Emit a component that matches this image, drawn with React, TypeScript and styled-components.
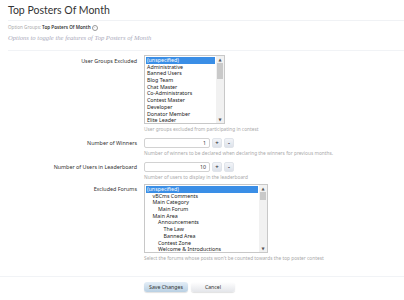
import React from "react";
import styled, { createGlobalStyle } from "styled-components";

const Global = createGlobalStyle`
  html, body { margin: 0; padding: 0; background: #fff; }
  body { font-family: "Noto Sans", "DejaVu Sans", sans-serif; color: #222; }
`;

const Page = styled.div`
  width: 404px;
  height: 300px;
  overflow: hidden;
  background: #fff;
`;

const Header = styled.div`
  padding: 3px 0 0 8px;
`;

const Title = styled.h1`
  margin: 0;
  font-family: "Lato", "Noto Sans", sans-serif;
  font-weight: 400;
  font-size: 10.5px;
  line-height: 15px;
  color: #333;
  padding-bottom: 2px;
  border-bottom: 1px solid #f0f2f5;
`;

const Groups = styled.div`
  margin-top: 3px;
  font-size: 4.6px;
  line-height: 7px;
  color: #aaa;
  display: flex;
  align-items: center;
  gap: 1px;
  b { color: #333; font-weight: 600; }
`;

const Chevron = styled.span`
  display: inline-flex;
  width: 4px;
  height: 4px;
  border: 0.5px solid #999;
  border-radius: 50%;
  align-items: center;
  justify-content: center;
  font-size: 3px;
  color: #777;
  line-height: 1;
`;

const Desc = styled.div`
  margin-top: 3px;
  font-family: "Liberation Serif", "DejaVu Serif", serif;
  font-style: italic;
  font-size: 6.6px;
  line-height: 8px;
  color: #aab;
  padding-bottom: 8px;
  border-bottom: 1px solid #f1f3f6;
`;

const Form = styled.div`
  padding-top: 4px;
  display: grid;
  grid-template-columns: 137px 1fr;
  column-gap: 7px;
`;

const Label = styled.div<{ $top: number }>`
  text-align: right;
  font-size: 5.4px;
  line-height: 7px;
  color: #333;
  padding-top: ${(p) => p.$top}px;
`;

const Field = styled.div<{ $gap: number }>`
  margin-bottom: ${(p) => p.$gap}px;
`;

const Help = styled.div`
  margin-top: 2px;
  font-size: 4.8px;
  line-height: 7px;
  color: #aaa;
  white-space: nowrap;
`;

const ListBox = styled.div<{ $w: number }>`
  width: ${(p) => p.$w}px;
  height: 69px;
  border: 1px solid #c8c8c8;
  box-sizing: border-box;
  display: flex;
  background: #fff;
`;

const Items = styled.div`
  flex: 1;
  padding: 1px 1px 0 1px;
  overflow: hidden;
`;

const Item = styled.div<{ $sel?: boolean; $indent?: number }>`
  height: 6.7px;
  line-height: 6.7px;
  font-size: 5.3px;
  white-space: nowrap;
  padding-left: ${(p) => 1 + (p.$indent || 0) * 5.5}px;
  background: ${(p) => (p.$sel ? "#3a8ee6" : "transparent")};
  color: ${(p) => (p.$sel ? "#fff" : "#222")};
`;

const Scroll = styled.div`
  width: 8px;
  background: #f1f1f1;
  display: flex;
  flex-direction: column;
  align-items: center;
  padding: 1px 0;
  box-sizing: border-box;
`;

const Arrow = styled.div`
  font-size: 4px;
  line-height: 5px;
  color: #555;
  height: 5px;
`;

const Thumb = styled.div<{ $h: number }>`
  width: 6px;
  height: ${(p) => p.$h}px;
  background: #c9c9c9;
  margin-top: 1px;
`;

const Spacer = styled.div`
  flex: 1;
`;

const SpinRow = styled.div`
  display: flex;
  align-items: center;
  gap: 2px;
`;

const NumInput = styled.div`
  width: 66px;
  height: 10px;
  box-sizing: border-box;
  border: 1px solid #d2d2d2;
  border-radius: 2px;
  font-size: 5.3px;
  line-height: 8px;
  text-align: right;
  padding-right: 3px;
  color: #333;
  background: #fff;
`;

const SpinBtn = styled.div`
  width: 10px;
  height: 10px;
  box-sizing: border-box;
  border-radius: 2px;
  background: linear-gradient(#f2f4f8, #dde2ea);
  border: 1px solid #e0e4ea;
  font-size: 6px;
  line-height: 8px;
  text-align: center;
  color: #334;
  font-weight: 700;
`;

const Footer = styled.div`
  margin-top: 14px;
  border-top: 1px solid #f1f3f6;
  padding: 5px 0 0 144px;
  display: flex;
  gap: 3px;
`;

const Button = styled.div<{ $primary?: boolean }>`
  width: 44px;
  height: 10px;
  box-sizing: border-box;
  border-radius: 3px;
  font-size: 5.2px;
  line-height: 10px;
  text-align: center;
  color: #333;
  background: ${(p) =>
    p.$primary ? "linear-gradient(#e4eef7, #b9d0e3)" : "linear-gradient(#ffffff, #e4e6ea)"};
  box-shadow: 0 1px 1px rgba(0, 0, 0, 0.12);
`;

const groups = [
  "(unspecified)",
  "Administrative",
  "Banned Users",
  "Blog Team",
  "Chat Master",
  "Co-Administrators",
  "Contest Master",
  "Developer",
  "Donator Member",
  "Elite Leader",
];

const forums: [string, number][] = [
  ["(unspecified)", 0],
  ["vBCms Comments", 1],
  ["Main Category", 1],
  ["Main Forum", 2],
  ["Main Area", 1],
  ["Announcements", 2],
  ["The Law", 3],
  ["Banned Area", 3],
  ["Contest Zone", 2],
  ["Welcome & Introductions", 2],
];

export default function App() {
  return (
    <Page>
      <Global />
      <Header>
        <Title>Top Posters Of Month</Title>
        <Groups>
          Option Groups: <b>Top Posters Of Month</b> <Chevron>⌄</Chevron>
        </Groups>
        <Desc>Options to toggle the features of Top Posters of Month</Desc>
      </Header>
      <Form>
        <Label $top={3}>User Groups Excluded</Label>
        <Field $gap={5}>
          <ListBox $w={81}>
            <Items>
              {groups.map((g, i) => (
                <Item key={g} $sel={i === 0}>
                  {g}
                </Item>
              ))}
            </Items>
            <Scroll>
              <Arrow>▲</Arrow>
              <Thumb $h={16} />
              <Spacer />
              <Arrow>▼</Arrow>
            </Scroll>
          </ListBox>
          <Help>User groups excluded from participating in contest</Help>
        </Field>

        <Label $top={1.5}>Number of Winners</Label>
        <Field $gap={5}>
          <SpinRow>
            <NumInput>1</NumInput>
            <SpinBtn>+</SpinBtn>
            <SpinBtn>-</SpinBtn>
          </SpinRow>
          <Help>Number of winners to be declared when declaring the winners for previous months.</Help>
        </Field>

        <Label $top={1.5}>Number of Users in Leaderboard</Label>
        <Field $gap={3}>
          <SpinRow>
            <NumInput>10</NumInput>
            <SpinBtn>+</SpinBtn>
            <SpinBtn>-</SpinBtn>
          </SpinRow>
          <Help>Number of users to display in the leaderboard</Help>
        </Field>

        <Label $top={2}>Excluded Forums</Label>
        <Field $gap={0}>
          <ListBox $w={124}>
            <Items>
              {forums.map(([f, d], i) => (
                <Item key={f} $sel={i === 0} $indent={d}>
                  {f}
                </Item>
              ))}
            </Items>
            <Scroll>
              <Arrow>▲</Arrow>
              <Thumb $h={8} />
              <Spacer />
              <Arrow>▼</Arrow>
            </Scroll>
          </ListBox>
          <Help>Select the forums whose posts won't be counted towards the top poster contest</Help>
        </Field>
      </Form>
      <Footer>
        <Button $primary>Save Changes</Button>
        <Button>Cancel</Button>
      </Footer>
    </Page>
  );
}
